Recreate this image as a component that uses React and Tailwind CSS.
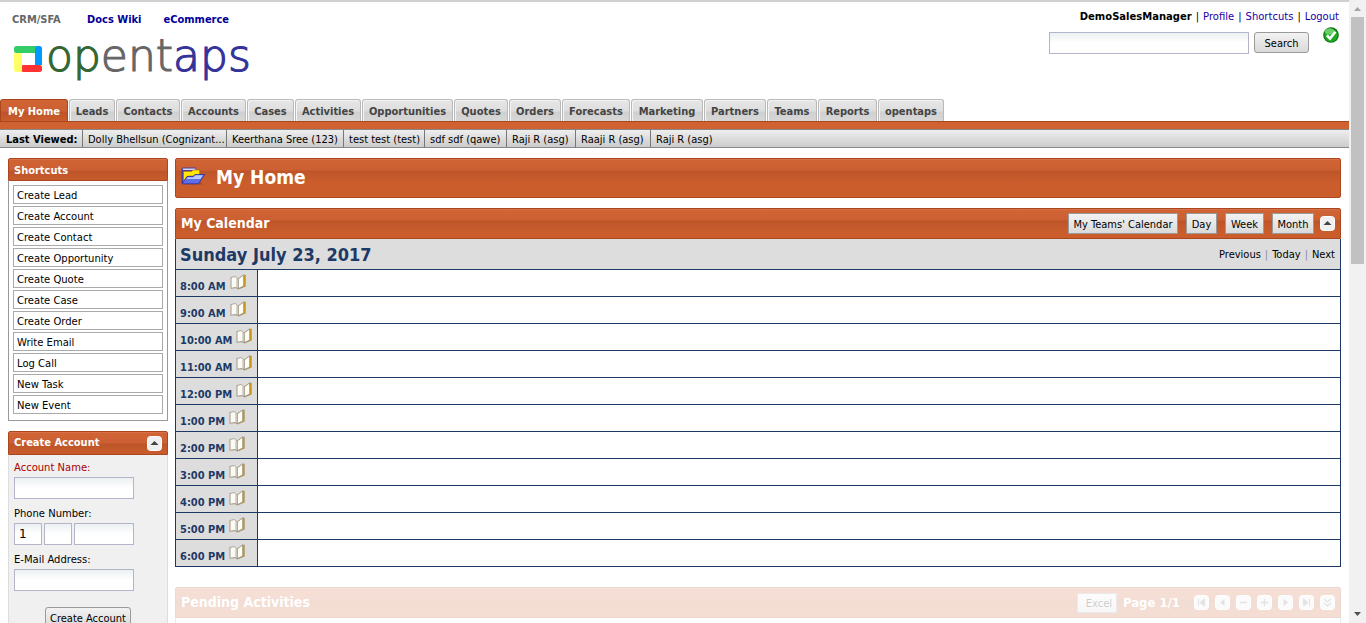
const SANS = "font-['DejaVu_Sans_Condensed','DejaVu_Sans',sans-serif]";
const WIDE = "font-['DejaVu_Sans',sans-serif]";

const tabs = [
  ["My Home", "w-[68px]"],
  ["Leads", "w-[46px]"],
  ["Contacts", "w-[64px]"],
  ["Accounts", "w-[65px]"],
  ["Cases", "w-[47px]"],
  ["Activities", "w-[66px]"],
  ["Opportunities", "w-[91px]"],
  ["Quotes", "w-[54px]"],
  ["Orders", "w-[52px]"],
  ["Forecasts", "w-[68px]"],
  ["Marketing", "w-[72px]"],
  ["Partners", "w-[62px]"],
  ["Teams", "w-[50px]"],
  ["Reports", "w-[59px]"],
  ["opentaps", "w-[66px]"],
];

const viewed = [
  ["Dolly Bhellsun (Cognizant...", "w-[144px]"],
  ["Keerthana Sree (123)", "w-[117px]"],
  ["test test (test)", "w-[81px]"],
  ["sdf sdf (qawe)", "w-[82px]"],
  ["Raji R (asg)", "w-[69px]"],
  ["Raaji R (asg)", "w-[75px]"],
  ["Raji R (asg)", "w-[75px]"],
];

const shortcuts = [
  "Create Lead", "Create Account", "Create Contact", "Create Opportunity", "Create Quote", "Create Case",
  "Create Order", "Write Email", "Log Call", "New Task", "New Event",
];

const hours = [
  "8:00 AM", "9:00 AM", "10:00 AM", "11:00 AM", "12:00 PM", "1:00 PM",
  "2:00 PM", "3:00 PM", "4:00 PM", "5:00 PM", "6:00 PM",
];

const HEAD =
  "border border-[#a9481f] rounded-t-[2px] shadow-[inset_0_1px_0_#d9704a] bg-[linear-gradient(#d06434_0,#cc6033_11px,#bd5529_12px,#cb5d2d_24px)] text-white font-bold";
const FIELD = "h-[22px] border border-[#b3b5ca] bg-[linear-gradient(#ebf0f1,#fff_10px)] px-1 text-[12px] outline-none";
const BUTTON = "border border-[#9a9a9a] bg-linear-to-b from-[#f2f2f2] to-[#dadada] pt-0.5 text-[11px] leading-4 text-black";

function BookIcon() {
  return (
    <svg width="16" height="16" viewBox="0 0 16 16" aria-hidden="true">
      <path d="M.5 3 5.500 2.300 8 4.500 13.500.500 15.700.800V12.500L8.500 15.500 6 14.300.5 14.800Z" fill="#a39b88" />
      <path d="M1.500 3.800 5.500 3 7.800 5.200v8.600L5.500 13l-4 .8Z" fill="#fbfaf5" />
      <path d="M8.500 5.200 13.200 1.800v9.900L8.500 14Z" fill="#fffef8" />
      <path d="M13.800 1.300 15.200 1.200V12.300L9 15l4.800-2.800Z" fill="#c9971a" />
      <path d="M6 4 7.600 5.500v7.800L6 12.700Z" fill="#d8d4c9" />
      <path d="M8.200 5V14.300" stroke="#8d8778" strokeWidth=".7" />
    </svg>
  );
}

function FolderIcon() {
  return (
    <svg width="26" height="20" viewBox="0 0 26 20" aria-hidden="true">
      <path d="M4 17.500h19l-3-3Z" fill="#8d3d1c" opacity=".6" />
      <path d="M1.500 2 3 .5h13L16.500 4H6L3 16H1.500Z" fill="#4a3f9c" />
      <path d="M3 1.500h12.500V3H3Z" fill="#d9d5f4" />
      <path d="M3.500 4.500h8L13 3h6.500V9H7.500l-4 6Z" fill="#ffe900" stroke="#b5651d" strokeWidth=".6" />
      <path d="M2 16.800 7 9.500h6L15 7.500H24.500L18.500 16.800Z" fill="#5d6fe8" stroke="#2630a8" strokeWidth=".8" />
      <path d="M7.500 10.300h6L15.500 8.300H23L20.500 12H6.500Z" fill="#b9c6ff" />
    </svg>
  );
}

function CheckIcon() {
  return (
    <svg width="16" height="16" viewBox="0 0 16 16" aria-hidden="true">
      <circle cx="8" cy="8" r="7.800" fill="#0a6a12" />
      <circle cx="8" cy="8.300" r="6.700" fill="#1ea820" />
      <ellipse cx="6.500" cy="4.500" rx="5" ry="3.300" fill="#7bd977" opacity=".8" />
      <path d="m3.800 8.300 3.200 3.200 5.500-6.700" fill="none" stroke="#fff" strokeWidth="2.600" />
    </svg>
  );
}

const glyphs = {
  up: <path d="m3.500 9 4-4 4 4Z" fill="#444" />,
  first: <path d="M4.500 4v7M10.500 4v7L6 7.500Z" fill="#777" stroke="#777" strokeWidth="1" />,
  prev: <path d="M9.500 4v7L5 7.500Z" fill="#777" />,
  minus: <path d="M4 7.500h7" stroke="#777" strokeWidth="1.500" />,
  plus: <path d="M4 7.500h7M7.500 4v7" stroke="#777" strokeWidth="1.500" />,
  next: <path d="M5.500 4v7L10 7.500Z" fill="#777" />,
  last: <path d="M10.500 4v7M4.500 4v7L9 7.500Z" fill="#777" stroke="#777" strokeWidth="1" />,
  down: <path d="m4 4 3.500 3L11 4M4 8l3.500 3L11 8" fill="none" stroke="#777" strokeWidth="1.300" />,
};

function IconButton({ kind, label }) {
  return (
    <button type="button" aria-label={label} className="block size-[15px]">
      <svg width="15" height="15" viewBox="0 0 15 15" aria-hidden="true">
        <rect x=".5" y=".5" width="14" height="14" rx="3" fill="#f0f0f0" stroke="#fff" />
        {glyphs[kind]}
      </svg>
    </button>
  );
}

function Logo() {
  return (
    <svg width="245" height="61" viewBox="0 -9 245 61" role="img" aria-label="opentaps">
      <rect x="0" y="8" width="24" height="7" rx="2.500" fill="#33cc66" />
      <rect x="7" y="27" width="21" height="7" rx="2.500" fill="#ff3333" />
      <rect x="21" y="8" width="7" height="19" rx="2.500" fill="#0099ff" />
      <path d="M21 12h7v15h-7Z" fill="#0099ff" />
      <path d="M0 15h8v16.500a2.500 2.500 0 0 1-2.500 2.500h-3A2.500 2.500 0 0 1 0 31.500Z" fill="#ffff66" />
      <text x="32" y="33" fontSize="44" className="font-['DejaVu_Sans',sans-serif] font-extralight" strokeWidth="1.200">
        <tspan fill="#336633" stroke="#336633">op</tspan>
        <tspan fill="#666" stroke="#666">ent</tspan>
        <tspan fill="#333399" stroke="#333399">aps</tspan>
      </text>
    </svg>
  );
}

function Field({ id, label, required }) {
  return (
    <div className="flex flex-col">
      <label htmlFor={id} className={`leading-[19px] ${required ? "text-[#aa0000]" : "text-black"}`}>{label}</label>
      <input id={id} className={`${FIELD} w-[120px]`} />
    </div>
  );
}

export default function App() {
  return (
    <div className={`flex h-screen overflow-hidden bg-white text-[11px] text-black ${SANS}`}>
      <div className="min-w-0 flex-1 border-t-2 border-[#d0d0d0]">
        <header className="flex h-[97px] justify-between pl-3 pr-[10px]">
          <div className="pt-[9px]">
            <nav className="flex gap-[22px] leading-[18px] font-bold text-[#000099]">
              <a href="#crm" className="w-[53px] text-[#666]">CRM/SFA</a>
              <a href="#wiki">Docs Wiki</a>
              <a href="#ecommerce">eCommerce</a>
            </nav>
            <div className="pl-0.5"><Logo /></div>
          </div>
          <div className={`pt-2 ${WIDE}`}>
            <div className="flex justify-end gap-1 text-[10px] leading-[13px] text-[#1a00a8]">
              <b className="text-black">DemoSalesManager</b>
              <span className="text-black">|</span>
              <a href="#profile">Profile</a>
              <span className="text-black">|</span>
              <a href="#shortcuts">Shortcuts</a>
              <span className="text-black">|</span>
              <a href="#logout">Logout</a>
            </div>
            <div className="flex items-start justify-end pt-1">
              <input aria-label="Search" className={`${FIELD} mt-[5px] w-[200px]`} />
              <button type="button" className={`${BUTTON} ${SANS} mr-[14px] ml-[5px] mt-[5px] h-[21px] w-[55px] rounded-[3px]`}>Search</button>
              <CheckIcon />
            </div>
          </div>
        </header>

        <nav className="flex h-[22px] gap-px font-bold">
          {tabs.map(([name, width], i) => (
            <a
              key={name}
              href={`#${name}`}
              className={`${width} shrink-0 rounded-t-[3px] border border-b-0 text-center leading-[23px] ${
                i === 0
                  ? "border-[#a9481f] bg-[linear-gradient(#d06434_0,#cc6033_11px,#bd5529_12px,#cb5d2d_22px)] text-white"
                  : "border-[#b9b9b9] bg-[linear-gradient(#e6e6e6_0,#dedede_11px,#d0d0d0_12px,#d8d8d8_22px)] text-[#444] shadow-[inset_1px_1px_0_#f4f4f4]"
              }`}
            >
              {name}
            </a>
          ))}
        </nav>
        <div className="h-2 border-t border-[#a9481f] bg-[#d06232]" />
        <nav className="flex h-[19px] border-y border-[#888] bg-linear-to-b from-[#eee] to-[#ccc] leading-[19px]">
          <b className="w-[82px] pl-1.5">Last Viewed:</b>
          {viewed.map(([name, width], i) => (
            <a key={i} href="#viewed" className={`${width} shrink-0 whitespace-nowrap border-l border-[#777] pl-[5px]`}>{name}</a>
          ))}
        </nav>

        <div className="flex gap-[7px] px-2 pt-[10px]">
          <aside className={`flex w-40 shrink-0 flex-col gap-[10px] text-[10px] ${WIDE}`}>
            <section>
              <h2 className={`${HEAD} ${SANS} h-[23px] pl-[5px] text-[11px] leading-[23px]`}>Shortcuts</h2>
              <ul className="flex flex-col gap-0.5 border border-t-0 border-[#999] px-1 pt-1 pb-[6px]">
                {shortcuts.map((s) => (
                  <li key={s}>
                    <a href="#create" className="block h-[19px] border border-[#aaa] pl-[3px] leading-[19px]">{s}</a>
                  </li>
                ))}
              </ul>
            </section>
            <section>
              <h2 className={`${HEAD} ${SANS} flex h-6 items-center justify-between px-[5px] text-[11px]`}>
                Create Account
                <IconButton kind="up" label="Collapse Create Account" />
              </h2>
              <form className="flex h-64 flex-col gap-[5px] border-x border-[#ddd] bg-[#f0f0f0] px-[5px] pt-[3px]">
                <Field id="account" label="Account Name:" required />
                <div>
                  <label htmlFor="country" className="block leading-[19px]">Phone Number:</label>
                  <div className="flex gap-0.5">
                    <input id="country" defaultValue="1" className={`${FIELD} w-7`} />
                    <input aria-label="Area code" className={`${FIELD} w-7`} />
                    <input aria-label="Number" className={`${FIELD} w-[60px]`} />
                  </div>
                </div>
                <Field id="email" label="E-Mail Address:" />
                <button type="button" className={`${BUTTON} ${SANS} mt-[11px] ml-[31px] h-[22px] w-[86px] whitespace-nowrap rounded-[3px]`}>Create Account</button>
              </form>
            </section>
          </aside>

          <main className="min-w-0 flex-1">
            <div className={`${HEAD} flex h-10 items-center gap-[10px] rounded-b-[2px] pb-0.5 pl-1 text-[19px] leading-6`}>
              <FolderIcon />
              <h1>My Home</h1>
            </div>

            <section className="mt-[10px]">
              <div className={`${HEAD} flex h-[31px] items-center justify-between pr-[5px] pl-[5px]`}>
                <h2 className="pb-0.5 text-[14px] leading-5">My Calendar</h2>
                <div className="flex items-center gap-2 font-normal">
                  <button type="button" className={`${BUTTON} h-[21px] w-[110px]`}>My Teams' Calendar</button>
                  <button type="button" className={`${BUTTON} h-[21px] w-[31px]`}>Day</button>
                  <button type="button" className={`${BUTTON} h-[21px] w-[39px]`}>Week</button>
                  <button type="button" className={`${BUTTON} mr-[-2px] h-[21px] w-[42px]`}>Month</button>
                  <IconButton kind="up" label="Collapse My Calendar" />
                </div>
              </div>
              <div className="flex h-[30px] items-center justify-between border-x border-[#1d3a66] bg-[#ddd] pr-[5px] pl-1">
                <h3 className="text-[18px] font-bold text-[#1d3a66]">Sunday July 23, 2017</h3>
                <div className="flex gap-1 pt-0.5 leading-[18px]">
                  <a href="#previous">Previous</a>
                  <span className="text-[#88a]">|</span>
                  <a href="#today">Today</a>
                  <span className="text-[#88a]">|</span>
                  <a href="#next">Next</a>
                </div>
              </div>
              <table className="w-full border-collapse">
                <tbody>
                  {hours.map((h) => (
                    <tr key={h} className="h-[27px]">
                      <th scope="row" className="w-[82px] border border-[#1d3a66] bg-[#ddd] p-0 pl-1 text-left text-[11px] font-bold text-[#1d3a66]">
                        <span className="flex h-[26px] gap-1 whitespace-nowrap">
                          <span className="pt-[9px]">{h}</span>
                          <a href="#event" aria-label={`Add event at ${h}`} className="pt-1"><BookIcon /></a>
                        </span>
                      </th>
                      <td className="border border-[#1d3a66] p-0" />
                    </tr>
                  ))}
                </tbody>
              </table>
            </section>

            <section className="mt-5 opacity-20">
              <div className={`${HEAD} flex h-[31px] items-center justify-between px-[5px]`}>
                <h2 className="pb-0.5 text-[14px] leading-5">Pending Activities</h2>
                <div className="flex items-center gap-[6px]">
                  <button type="button" className={`${BUTTON} h-5 w-10 pl-1 font-normal`}>Excel</button>
                  <span className="mr-2 text-[13px]">Page 1/1</span>
                  <IconButton kind="first" label="First page" />
                  <IconButton kind="prev" label="Previous page" />
                  <IconButton kind="minus" label="Fewer rows" />
                  <IconButton kind="plus" label="More rows" />
                  <IconButton kind="next" label="Next page" />
                  <IconButton kind="last" label="Last page" />
                  <IconButton kind="down" label="Expand" />
                </div>
              </div>
              <div className="h-10 border-x border-[#999]" />
            </section>
          </main>
        </div>
      </div>

      <div aria-hidden="true" className="flex w-[17px] shrink-0 flex-col items-center justify-between bg-[#f1f1f1] px-0.5">
        <svg width="13" height="17" viewBox="0 0 13 17"><path d="m3 11 3.500-4 3.500 4Z" fill="#a3a3a3" /></svg>
        <div className="mb-auto h-[247px] w-[13px] bg-[#c1c1c1]" />
        <svg width="13" height="17" viewBox="0 0 13 17"><path d="m3 6 3.500 4L10 6Z" fill="#505050" /></svg>
      </div>
    </div>
  );
}
